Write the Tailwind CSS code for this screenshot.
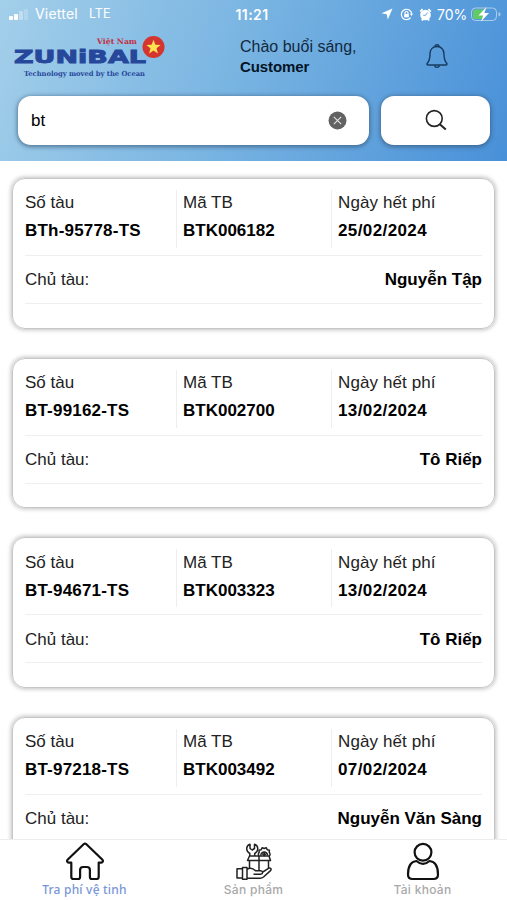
<!DOCTYPE html>
<html lang="vi">
<head>
  <meta charset="UTF-8" />
  <meta name="viewport" content="width=device-width, initial-scale=1.0"/>
  <title>Zunibal - Tra phí vệ tinh</title>
  <script src="https://cdn.jsdelivr.net/npm/@tailwindcss/browser@4"></script>
</head>
<body class="bg-white font-['Liberation_Sans',Arial,sans-serif] text-[17px] text-[#222] w-[507px] h-[900px] flex flex-col overflow-hidden">

  <header class="h-[161px] shrink-0 bg-[linear-gradient(110deg,#a3cfea_0%,#7ab5e2_45%,#4890d8_100%)]">
    <!-- Status bar -->
    <div class="h-7 pl-2 pr-1.5 flex items-center justify-between text-white font-[Inter,sans-serif] text-[14px]">
      <div class="w-[200px] flex items-center leading-5">
        <svg width="22" height="13" viewBox="0 0 22 13" fill="#fff">
          <rect x="1" y="8" width="4" height="4" rx="1"/>
          <rect x="6" y="6" width="4" height="6" rx="1"/>
          <rect x="11" y="3" width="4" height="9" rx="1" opacity=".35"/>
          <rect x="16" y="1" width="4" height="11" rx="1" opacity=".2"/>
        </svg>
        <span class="ml-[5px] w-[54px] tracking-[0.2px]">Viettel</span>
        <span class="text-[12.5px]">LTE</span>
      </div>
      <span class="font-semibold text-[14px] w-[60px] pl-[11px] tracking-[0.4px]">11:21</span>
      <div class="w-[200px] flex items-center justify-end">
        <svg width="12" height="12" viewBox="0 0 12 12" fill="#fff"><path d="M11.500.5 6.800 11.500 5.700 6.300.500 5.200z"/></svg>
        <svg class="ml-[7px]" width="13" height="13" viewBox="0 0 13 13" fill="none" stroke="#fff" stroke-width="1.200"><path d="M10.600 9.700A5.200 5.200 0 1 1 11.700 6"/><path d="M9.800 5.800h3.200l-1.500 2.200z" fill="#fff" stroke="none"/><rect x="4.200" y="6" width="4.600" height="3.300" fill="#fff" stroke="none"/><path d="M5 6V5a1.500 1.500 0 0 1 3 0v1"/></svg>
        <svg class="ml-[6px]" width="13" height="13" viewBox="0 0 13 13"><circle cx="6.500" cy="7" r="5.300" fill="#fff"/><path d="M1.200 3.600 3.600 1.200M9.400 1.200l2.400 2.400M2.800 12.500l1.400-1.400M10.200 12.500l-1.400-1.400" stroke="#fff" stroke-width="1.800"/><path d="M8.500 4.500 6.500 7.300H4.200" stroke="#67a5de" fill="none"/></svg>
        <span class="ml-[5px] mr-[3px] text-[14px] w-[30px]">70%</span>
        <svg width="31" height="17" viewBox="0 0 31 17"><rect x="1.500" y="2" width="25" height="12.500" rx="4" fill="none" stroke="#fff" stroke-opacity=".5"/><path d="M28.500 6v4.500q2-.5 2-2.200t-2-2.300" fill="#fff" opacity=".5"/><path d="M5.500 3.500h8.500v9.500H5.500a2.500 2.500 0 0 1-2.500-2.500V6a2.500 2.500 0 0 1 2.500-2.500z" fill="#62cb65"/><path d="M16.500 1 8.500 9.500h4.700L11 15.500l8-8.500h-4.700z" fill="#fff"/></svg>
      </div>
    </div>

    <!-- Logo and greeting -->
    <div class="h-[67px] flex">
      <svg class="shrink-0" width="240" height="60" viewBox="0 28 240 60">
        <text x="97" y="44" textLength="40" lengthAdjust="spacingAndGlyphs" font-family="DejaVu Serif" font-weight="bold" font-size="7.500" fill="#c32f45">Việt Nam</text>
        <text x="14" y="62.800" textLength="132" lengthAdjust="spacingAndGlyphs" font-family="DejaVu Sans" font-weight="bold" font-size="17.500" fill="#27479b" stroke="#27479b" stroke-width=".9">ZUNiBAL</text>
        <text x="24" y="75.500" textLength="121" lengthAdjust="spacingAndGlyphs" font-family="DejaVu Serif" font-weight="bold" font-size="7" fill="#27479b">Technology moved by the Ocean</text>
        <circle cx="153.500" cy="47" r="11" fill="#d5352f"/>
        <path d="M153.500 39.800l1.900 4.900 5.200.3-4.100 3.300 1.400 5.100-4.400-2.900-4.400 2.900 1.400-5.100-4.100-3.300 5.200-.3z" fill="#ffe34f"/>
      </svg>
      <div class="w-[185px] pt-[9px] leading-5">
        <p class="text-[16px] text-[#12293f]">Chào buổi sáng,</p>
        <p class="text-[15px] font-bold text-[#041426] tracking-[-0.1px]">Customer</p>
      </div>
      <svg class="mt-[15px]" width="24" height="28" viewBox="0 0 24 28" fill="none" stroke="#173b60" stroke-width="1.400" stroke-linejoin="round">
        <path d="M12 3.500c-4.500 0-7 3.300-7 7.500 0 5.500-.7 7.200-2.800 9.500-.5.600-.1 1.500.7 1.500h18.200c.8 0 1.200-.9.700-1.500-2.100-2.300-2.800-4-2.800-9.500 0-4.200-2.500-7.500-7-7.500z"/>
        <path d="M10 3.700a2 2 0 1 1 4 0M9.500 22.300a2.600 2.800 0 0 0 5 0"/>
      </svg>
    </div>

    <!-- Search -->
    <div class="pl-[18px] pr-[17px] pt-[1px] flex gap-[12px]">
      <div class="w-[351px] h-[49px] bg-white rounded-[13px] shadow-[0_1px_4px_1px_rgba(50,80,110,.65)] flex items-center justify-between pl-[13px] pr-[22px] text-black">
        <span>bt</span>
        <svg width="19" height="19" viewBox="0 0 19 19"><circle cx="9.500" cy="9.500" r="9" fill="#626262"/><path d="M5.800 5.800l7.400 7.400M13.200 5.800l-7.400 7.400" stroke="#e0e0e0" stroke-width="1.200"/></svg>
      </div>
      <div class="w-[109px] h-[49px] bg-white rounded-[13px] shadow-[0_1px_4px_1px_rgba(50,80,110,.65)] flex items-center justify-center">
        <svg class="mb-[2px]" width="22" height="22" viewBox="0 0 22 22" fill="none" stroke="#222" stroke-width="1.600"><circle cx="9.300" cy="9.500" r="7.900"/><path d="M14.500 15l6.300 5.600" stroke-width="2"/></svg>
      </div>
    </div>
  </header>

  <main class="flex-1 min-h-0 overflow-hidden px-3 pt-[17px] flex flex-col gap-[29px]">
    <section class="h-[150.7px] shrink-0 rounded-[13px] border border-[#c6c6c6] shadow-[0_0_4px_1px_rgba(0,0,0,.25)] px-3">
      <div class="h-[77px] pt-3 flex border-b border-[#efefef]">
        <div class="w-[152px] h-[58px] leading-[28px] -mt-px border-r border-[#eee]">
          <p class="-mt-px">Số tàu</p>
          <p class="font-bold text-black tracking-[0.2px]">BTh-95778-TS</p>
        </div>
        <div class="w-[155px] h-[58px] leading-[28px] -mt-px pl-[6px] border-r border-[#eee]">
          <p class="-mt-px">Mã TB</p>
          <p class="font-bold text-black">BTK006182</p>
        </div>
        <div class="leading-[28px] -mt-px pl-[6px]">
          <p class="-mt-px tracking-[0.1px]">Ngày hết phí</p>
          <p class="font-bold text-black tracking-[0.4px]">25/02/2024</p>
        </div>
      </div>
      <div class="h-12 pt-px flex items-center justify-between border-b border-[#efefef]">
        <span>Chủ tàu:</span>
        <span class="font-bold text-black">Nguyễn Tập</span>
      </div>
    </section>

    <section class="h-[150.7px] shrink-0 rounded-[13px] border border-[#c6c6c6] shadow-[0_0_4px_1px_rgba(0,0,0,.25)] px-3">
      <div class="h-[77px] pt-3 flex border-b border-[#efefef]">
        <div class="w-[152px] h-[58px] leading-[28px] -mt-px border-r border-[#eee]">
          <p class="-mt-px">Số tàu</p>
          <p class="font-bold text-black tracking-[0.2px]">BT-99162-TS</p>
        </div>
        <div class="w-[155px] h-[58px] leading-[28px] -mt-px pl-[6px] border-r border-[#eee]">
          <p class="-mt-px">Mã TB</p>
          <p class="font-bold text-black">BTK002700</p>
        </div>
        <div class="leading-[28px] -mt-px pl-[6px]">
          <p class="-mt-px tracking-[0.1px]">Ngày hết phí</p>
          <p class="font-bold text-black tracking-[0.4px]">13/02/2024</p>
        </div>
      </div>
      <div class="h-12 pt-[2px] flex items-center justify-between border-b border-[#efefef]">
        <span>Chủ tàu:</span>
        <span class="font-bold text-black">Tô Riếp</span>
      </div>
    </section>

    <section class="h-[150.7px] shrink-0 rounded-[13px] border border-[#c6c6c6] shadow-[0_0_4px_1px_rgba(0,0,0,.25)] px-3">
      <div class="h-[77px] pt-3 flex border-b border-[#efefef]">
        <div class="w-[152px] h-[58px] leading-[28px] -mt-px border-r border-[#eee]">
          <p>Số tàu</p>
          <p class="font-bold text-black tracking-[0.2px]">BT-94671-TS</p>
        </div>
        <div class="w-[155px] h-[58px] leading-[28px] -mt-px pl-[6px] border-r border-[#eee]">
          <p>Mã TB</p>
          <p class="font-bold text-black">BTK003323</p>
        </div>
        <div class="leading-[28px] -mt-px pl-[6px]">
          <p class="tracking-[0.1px]">Ngày hết phí</p>
          <p class="font-bold text-black tracking-[0.4px]">13/02/2024</p>
        </div>
      </div>
      <div class="h-12 pt-px flex items-center justify-between border-b border-[#efefef]">
        <span>Chủ tàu:</span>
        <span class="font-bold text-black">Tô Riếp</span>
      </div>
    </section>

    <section class="h-[150.7px] shrink-0 rounded-[13px] border border-[#c6c6c6] shadow-[0_0_4px_1px_rgba(0,0,0,.25)] px-3">
      <div class="h-[77px] pt-3 flex border-b border-[#efefef]">
        <div class="w-[152px] h-[58px] leading-[28px] -mt-px border-r border-[#eee]">
          <p class="-mt-px">Số tàu</p>
          <p class="font-bold text-black tracking-[0.2px]">BT-97218-TS</p>
        </div>
        <div class="w-[155px] h-[58px] leading-[28px] -mt-px pl-[6px] border-r border-[#eee]">
          <p class="-mt-px">Mã TB</p>
          <p class="font-bold text-black">BTK003492</p>
        </div>
        <div class="leading-[28px] -mt-px pl-[6px]">
          <p class="-mt-px tracking-[0.1px]">Ngày hết phí</p>
          <p class="font-bold text-black tracking-[0.4px]">07/02/2024</p>
        </div>
      </div>
      <div class="h-12 pt-px flex items-center justify-between border-b border-[#efefef]">
        <span>Chủ tàu:</span>
        <span class="font-bold text-black">Nguyễn Văn Sàng</span>
      </div>
    </section>
  </main>

  <!-- Bottom tabs -->
  <nav class="h-[61px] shrink-0 bg-white border-t border-[#ececec] grid grid-cols-3 text-[12px] font-medium font-['Noto_Sans',sans-serif]">
    <div class="flex flex-col items-center pt-[2px] text-[#7896d8]">
      <svg width="40" height="39" viewBox="0 0 40 39" fill="none" stroke="#111" stroke-width="2.200" stroke-linejoin="round">
        <path d="M18.600 2.300 2.800 17.500c-1.500 1.500-.4 3.300 1.700 3.200h1.800v14q0 2.300 2.300 2.300h4.500q2 0 2-2.300V28q0-3 3-3h3.800q3 0 3 3v6.700q0 2.300 2 2.300h4.500q2.300 0 2.300-2.300v-14h1.800c2.100.1 3.200-1.700 1.700-3.200L21.400 2.300q-1.400-1.300-2.800 0z"/>
      </svg>
      <span class="pt-px leading-4 tracking-[0.2px]">Tra phí vệ tinh</span>
    </div>
    <div class="flex flex-col items-center pt-[2px] text-[#a9a9a9] font-[Inter,sans-serif]">
      <svg width="36" height="39" viewBox="0 0 36 39" fill="none" stroke="#222" stroke-width="1.500" stroke-linejoin="round">
        <!-- Wrench and gear -->
        <path d="M13.800 14v-2.500c-4.500-2.500-3.800-8 .2-9.300v4.300l2.200 1.500 2.300-1.500V2.200c4 1.300 4.700 6.800.2 9.300V14"/>
        <path d="M23 14c-1-1.200-.8-3 .2-3.700L23 8.200l2.200-.5 1-2 2 .8 2-.8 1 2 2.200.5-.2 2.100c1 .7 1.200 2.500.2 3.700"/>
        <path d="M24.800 13.500a3.400 3.400 0 0 1 6.800 0M28.200 10v4M25.800 11l2.400 2.500 2.400-2.500"/>
        <!-- Box -->
        <path d="M13.500 14h19.500l1.500 4.500h-23zM23 14v4.500M13.500 18.500v8.500M32.500 18.500v7.500M23 18.500V29"/>
        <!-- Hand -->
        <path d="M1 26.800h5.500V36H1zM6.500 25.500h4.500V37.300H6.500zM11 27.500c3-2.200 6-1.200 8.500 1.300h5c2.800.3 2.800 3.200 0 3.500h-7M26 30.500l6.500-4.200c2-.8 3.400.8 2 2.300L27.500 35c-1 .8-2 1.200-3.500 1.200H11"/>
      </svg>
      <span class="pt-px leading-4 tracking-[0.3px]">Sản phẩm</span>
    </div>
    <div class="flex flex-col items-center pt-[2px] text-[#a9a9a9] font-[Inter,sans-serif]">
      <svg width="34" height="39" viewBox="0 0 34 39" fill="none" stroke="#111" stroke-width="2.200" stroke-linejoin="round">
        <circle cx="17" cy="10.300" r="8.400"/>
        <path d="M10.500 19C5 19.500 2 24.500 2 32.500Q2 37 6.500 37h21q4.500 0 4.500-4.500c0-8-3-13-8.500-13.500-4.500 4-8.500 4-13 0z"/>
      </svg>
      <span class="pt-px leading-4 tracking-[0.3px]">Tài khoản</span>
    </div>
  </nav>
</body>
</html>
